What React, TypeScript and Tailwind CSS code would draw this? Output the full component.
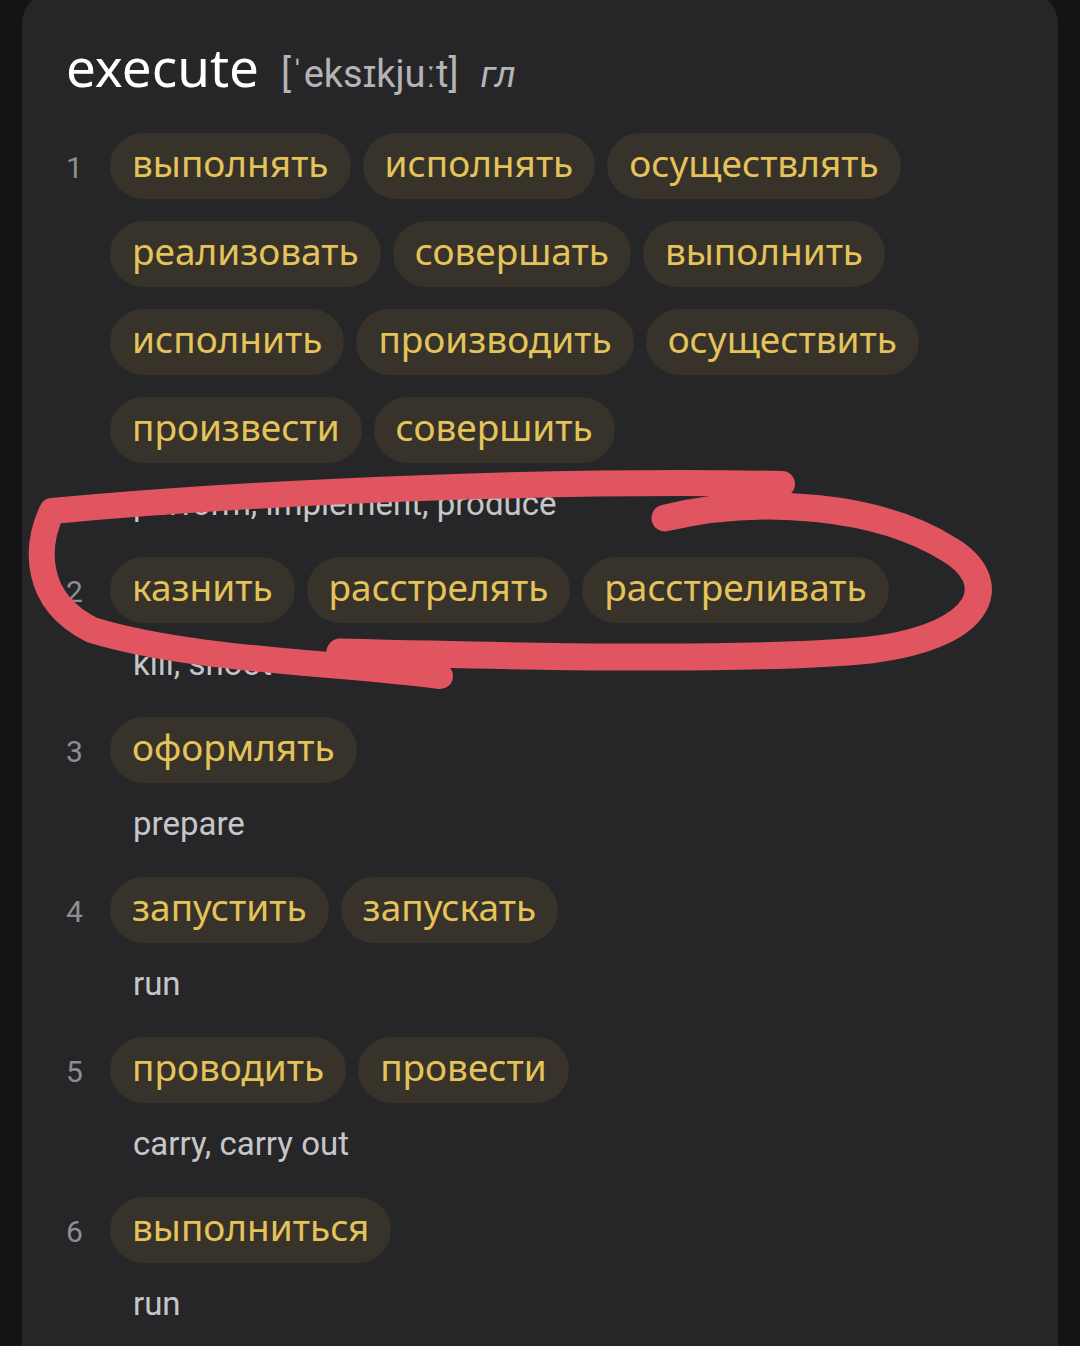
import React from 'react'

interface Meaning {
  n: number
  words: string[]
  gloss?: string
}

const meanings: Meaning[] = [
  {
    n: 1,
    words: [
      'выполнять',
      'исполнять',
      'осуществлять',
      'реализовать',
      'совершать',
      'выполнить',
      'исполнить',
      'производить',
      'осуществить',
      'произвести',
      'совершить',
    ],
    gloss: 'perform, implement, produce',
  },
  { n: 2, words: ['казнить', 'расстрелять', 'расстреливать'], gloss: 'kill, shoot' },
  { n: 3, words: ['оформлять'], gloss: 'prepare' },
  { n: 4, words: ['запустить', 'запускать'], gloss: 'run' },
  { n: 5, words: ['проводить', 'провести'], gloss: 'carry, carry out' },
  { n: 6, words: ['выполниться'], gloss: 'run' },
]

const Chip: React.FC<{ word: string }> = ({ word }) => (
  <div className="h-[66px] px-[22px] pb-[6px] rounded-full bg-[#37322a] text-[#e4c35b] text-[37px] leading-[60px] whitespace-nowrap font-['Noto_Sans',sans-serif]">
    {word}
  </div>
)

export default function App() {
  return (
    <div className="relative min-h-[1346px] bg-[#141416] overflow-hidden">
      <div className="mx-[22px] -mt-[10px] min-h-[1356px] rounded-t-[34px] bg-[#262628] pl-[44px] pr-[44px] pt-[47px] pb-[40px]">
        {/* headword */}
        <div className="flex items-baseline gap-[22px]">
          <span className="text-[53px] leading-[60px] text-white font-['Noto_Sans',sans-serif]">execute</span>
          <span className="text-[38px] text-[#b4b4b6] font-['Roboto',sans-serif]">[ˈeksɪkjuːt]</span>
          <span className="text-[37px] italic text-[#b4b4b6] font-['Roboto',sans-serif]">гл</span>
        </div>

        <div className="mt-[30px] flex flex-col gap-[33px]">
          {meanings.map((m) => (
            <div key={m.n} className="flex">
              <div className="w-[44px] shrink-0 h-[66px] pt-[3px] text-[30px] leading-[64px] text-[#8e8e90] font-['Roboto',sans-serif]">
                {m.n}
              </div>
              <div className="flex-1">
                <div className="flex flex-wrap gap-x-[12px] gap-y-[22px]">
                  {m.words.map((w) => (
                    <Chip key={w} word={w} />
                  ))}
                </div>
                {m.gloss && (
                  <div className="mt-[21px] pl-[23px] text-[33px] leading-[40px] text-[#c6c6c8] font-['Roboto',sans-serif]">
                    {m.gloss}
                  </div>
                )}
              </div>
            </div>
          ))}
        </div>
      </div>

      {/* hand-drawn red loop over meaning 2 */}
      <svg
        className="absolute left-0 top-0 pointer-events-none"
        width={1080}
        height={1346}
        viewBox="0 0 1080 1346"
        fill="none"
      >
        <path
          d="M 782 484 C 600 480 300 488 52 511 C 36 545 32 600 92 630 C 190 660 330 662 440 676"
          stroke="#e0555f"
          strokeWidth={26}
          strokeLinecap="round"
          strokeLinejoin="round"
        />
        <path
          d="M 340 652 C 500 656 750 662 870 650 C 990 635 1000 580 950 550 C 880 505 760 495 665 518"
          stroke="#e0555f"
          strokeWidth={27}
          strokeLinecap="round"
          strokeLinejoin="round"
        />
      </svg>
    </div>
  )
}
